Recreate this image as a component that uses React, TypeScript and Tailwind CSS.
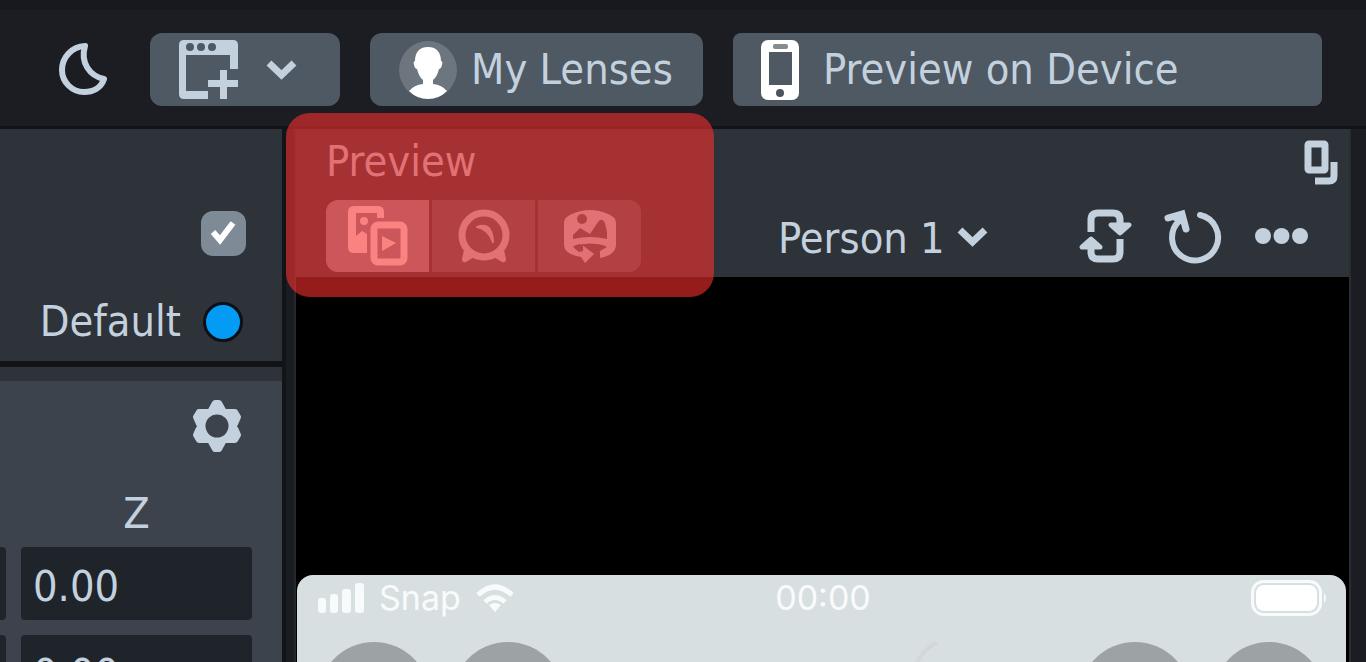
import { memo } from "react";
import type { ReactNode } from "react";

const rows = ["Position", "Rotation"];

export function App() {
  return (
    <div className="flex h-screen flex-col overflow-hidden bg-[#1b1d22] font-['DejaVu_Sans_Condensed','DejaVu_Sans',sans-serif] text-[43px] leading-none text-[#c3d1de]">
      <Toolbar />
      <main className="flex min-h-0 flex-1">
        <Inspector />
        <div className="w-[14px] shrink-0 border-r-2 border-l-4 border-r-[#25292d] border-l-[#111418] bg-[#191c20]"></div>
        <Preview />
        <div className="w-[17px] shrink-0 border-l-2 border-[#2a2d33]"></div>
      </main>
    </div>
  );
}

const Toolbar = memo(() => {
  return (
    <header className="shrink-0 border-b-[3px] border-[#111318] bg-[#1b1d22]">
      <div className="h-[10px] bg-[#18191e]"></div>
      <div className="flex items-center gap-[30px] pt-[23px] pr-11 pb-5 pl-14">
        <button className="mr-3" aria-label="Dark mode">
          <svg width="52" height="58" viewBox="0 0 52 58" fill="none" stroke="currentColor" strokeWidth="6" strokeLinejoin="round">
            <path d="M29 5A24 24 0 0 0 6 29C6 41 16 51 28 51C37 51 45 47 48 38C34 35 24 22 29 5Z" />
          </svg>
        </button>
        <button className="flex h-[73px] w-[190px] items-center gap-7 rounded-xl bg-[#4f5963] pl-[29px]" aria-label="New window">
          <svg width="59" height="59" viewBox="0 0 59 59" fill="currentColor">
            <path d="M5 0H54Q59 0 59 5V29H51V15H7V51H29V59H5Q0 59 0 54V5Q0 0 5 0Z" />
            <path d="M41 30H48V40H59V47H48V59H41V47H29V40H41Z" />
            <g fill="#4f5963">
              <circle cx="11" cy="7" r="4" />
              <circle cx="22" cy="7" r="4" />
              <circle cx="33" cy="7" r="4" />
            </g>
          </svg>
          <Chevron />
        </button>
        <button className="flex h-[73px] w-[333px] items-center gap-3.5 rounded-xl bg-[#4f5963] pl-[29px] whitespace-nowrap">
          <svg width="58" height="58" viewBox="0 0 58 58">
            <circle cx="29" cy="29" r="29" fill="#6d767e" />
            <path fill="#fff" d="M29 6C38 6 42 12 42 20Q44 20 43 24Q42 28 40 28Q38 36 34 39V43Q43 44 48 50Q40 58 29 58Q18 58 10 50Q15 44 24 43V39Q20 36 18 28Q16 28 15 24Q14 20 16 20C16 12 20 6 29 6Z" />
          </svg>
          My Lenses
        </button>
        <button className="flex h-[73px] flex-1 items-center gap-6 rounded-lg bg-[#4f5963] pl-7 whitespace-nowrap">
          <svg width="38" height="60" viewBox="0 0 38 60">
            <rect width="38" height="60" rx="7" fill="#fff" />
            <rect x="8" y="12" width="23" height="33" fill="#4f5963" />
            <rect x="12" y="4" width="15" height="5" rx="2" fill="#858b90" />
            <circle cx="19" cy="53" r="4" fill="#4b545d" />
          </svg>
          Preview on Device
        </button>
      </div>
    </header>
  );
});

const Inspector = memo(() => {
  return (
    <section className="flex w-[282px] shrink-0 flex-col overflow-hidden bg-[#2e3239]">
      <div className="flex h-[232px] shrink-0 flex-col items-end gap-11 pt-[82px] pr-9">
        <div className="relative h-[45px] w-[45px]">
          <input type="checkbox" defaultChecked aria-label="Enabled" className="block h-full w-full appearance-none rounded-xl bg-[#7e8b97]" />
          <svg className="pointer-events-none absolute inset-0" width="45" height="45" viewBox="0 0 45 45" fill="none" stroke="#fff" strokeWidth="6">
            <path d="M12 21L19 29L32 12" />
          </svg>
        </div>
        <div className="flex items-center gap-[22px] pr-[3px]">
          Default
          <button className="h-10 w-10 rounded-full border-[3px] border-[#0c1016] bg-[#049bf5]" aria-label="Layer colour"></button>
        </div>
      </div>
      <div className="h-5 shrink-0 border-t-[6px] border-[#111317]"></div>
      <div className="flex flex-1 flex-col items-end bg-[#3d434c] pt-[18px] pr-[30px]">
        <button className="mr-[9px]" aria-label="Settings">
          <svg width="52" height="54" viewBox="-26 -27 52 54" fill="currentColor" stroke="currentColor" strokeWidth="6" strokeLinejoin="round">
            <path d="M-2 -23H2L7 -14H18L21 -9L17 0L21 9L18 14H7L2 23H-2L-7 14H-18L-21 9L-17 0L-21 -9L-18 -14H-7Z" />
            <circle r="11.5" fill="#3d434c" stroke="none" />
          </svg>
        </button>
        <label htmlFor="Position-z" className="mt-[39px] mb-3 w-[231px] text-center">
          Z
        </label>
        <div className="flex flex-col gap-[15px]">
          {rows.map((row) => (
            <div key={row} className="flex justify-end gap-[15px]">
              <NumberBox id={`${row}-y`} label={`${row} Y`} />
              <NumberBox id={`${row}-z`} label={`${row} Z`} />
            </div>
          ))}
        </div>
      </div>
    </section>
  );
});

const NumberBox = ({ id, label }: { id: string; label: string }) => {
  return (
    <input id={id} aria-label={label} defaultValue="0.00" className="h-[73px] w-[231px] shrink-0 rounded-sm bg-[#1f242b] px-3 pt-1" />
  );
};

const Preview = memo(() => {
  return (
    <section className="relative flex min-w-0 flex-1 flex-col bg-black">
      <div className="h-[148px] shrink-0 bg-[#2e3239] pl-[30px]">
        <div className="flex h-[71px] items-start justify-between pt-[11px] pr-[11px]">
          <h2>Preview</h2>
          <button aria-label="Pop out">
            <svg width="34" height="45" viewBox="0 0 34 45" fill="none" stroke="currentColor" strokeWidth="7">
              <rect x="4" y="4" width="17" height="26" rx="1" />
              <path d="M30 22V36Q30 41 25 41H11" />
            </svg>
          </button>
        </div>
        <div className="flex items-center justify-between pr-[41px]">
          <div className="flex gap-[3px] overflow-hidden rounded-xl">
            <Tab label="Media" active>
              <MediaIcon />
            </Tab>
            <Tab label="Webcam">
              <WebcamIcon />
            </Tab>
            <Tab label="Interactive scene">
              <SceneIcon />
            </Tab>
          </div>
          <div className="flex items-center">
            <div className="relative mr-[90px]">
              <select aria-label="Preview source" className="block w-[210px] appearance-none bg-transparent pt-1 leading-[48px]">
                <option>Person 1</option>
              </select>
              <span className="pointer-events-none absolute top-4 right-0">
                <Chevron />
              </span>
            </div>
            <button className="mr-[30px]" aria-label="Swap camera">
              <svg width="54" height="56" viewBox="0 0 54 56" fill="none" stroke="currentColor" strokeWidth="7" strokeLinejoin="round">
                <path d="M13 24V12Q13 5 20 5H35Q42 5 42 12V17M42 31V44Q42 51 35 51H20Q13 51 13 44V39" />
                <path fill="currentColor" strokeWidth="5" d="M33 17H51L42 25ZM4 39H22L13 31Z" />
              </svg>
            </button>
            <button className="mr-[33px]" aria-label="Restart">
              <svg width="60" height="60" viewBox="0 0 60 60" fill="none" stroke="currentColor" strokeWidth="6" strokeLinecap="round">
                <path d="M38 9A23 23 0 1 1 17 15" />
                <path d="M6 12L20 8L24 23" strokeWidth="7" />
                <path d="M12 13L21 8L22 18Z" fill="currentColor" strokeWidth="3" />
              </svg>
            </button>
            <button aria-label="More">
              <svg width="53" height="16" viewBox="0 0 53 16" fill="currentColor">
                <circle cx="8" cy="8" r="8" />
                <circle cx="26.5" cy="8" r="8" />
                <circle cx="45" cy="8" r="8" />
              </svg>
            </button>
          </div>
        </div>
      </div>
      <Phone />
      {/* highlight around the title and source tabs */}
      <div className="pointer-events-none absolute -top-4 -left-[10px] h-[184px] w-[428px] rounded-3xl bg-[#f7302f]/60"></div>
    </section>
  );
});

const Tab = ({ label, active, children }: { label: string; active?: boolean; children: ReactNode }) => {
  return (
    <button
      aria-label={label}
      aria-pressed={!!active}
      className={
        active
          ? "flex h-[72px] w-[103px] items-center justify-center bg-[#8b919b] text-white"
          : "flex h-[72px] w-[103px] items-center justify-center bg-[#4f5963]"
      }
    >
      {children}
    </button>
  );
};

const Phone = memo(() => {
  return (
    <div className="mr-[3px] ml-px mt-[298px] shrink-0 rounded-t-2xl bg-[#d8dfe1]">
      <div className="grid h-[46px] grid-cols-[1fr_auto_1fr] items-center pr-[18px] pl-[21px] font-[Inter,sans-serif] text-[34px] text-[#f8fbfc]">
        <div className="flex items-center gap-[15px]">
          <svg width="46" height="30" viewBox="0 0 46 30" fill="currentColor">
            <rect y="15" width="8" height="15" rx="3" />
            <rect x="12" y="11" width="8" height="19" rx="3" />
            <rect x="24" y="6" width="9" height="24" rx="3" />
            <rect x="37" width="9" height="30" rx="3" />
          </svg>
          Snap
          <svg width="38" height="29" viewBox="0 0 38 29" fill="none" stroke="currentColor" strokeWidth="5">
            <path d="M2 11Q19 -5 36 11M9 18Q19 9 29 18" />
            <path d="M13 21Q19 17 25 21L19 28Z" fill="currentColor" stroke="none" />
          </svg>
        </div>
        <span>00:00</span>
        <svg className="justify-self-end" width="77" height="36" viewBox="0 0 77 36" fill="currentColor">
          <rect x="1.5" y="1.5" width="68" height="33" rx="11" fill="none" stroke="currentColor" strokeWidth="3" />
          <rect x="5" y="5" width="61" height="26" rx="8" fill="#fff" />
          <path d="M73 13Q77 18 73 23Z" />
        </svg>
      </div>
      <div className="flex items-start gap-[22px] px-[21px] pt-[21px]">
        <div className="h-28 w-28 rounded-full bg-[#9da2a4]"></div>
        <div className="h-28 w-28 rounded-full bg-[#9da2a4]"></div>
        <svg className="mr-[112px] ml-auto" width="32" height="40" viewBox="0 0 32 40" fill="none" stroke="#d1d7da" strokeWidth="4">
          <path d="M3 22Q10 8 24 0" />
        </svg>
        <div className="h-28 w-28 rounded-full bg-[#9da2a4]"></div>
        <div className="h-28 w-28 rounded-full bg-[#9da2a4]"></div>
      </div>
    </div>
  );
});

const Chevron = () => {
  return (
    <svg width="31" height="22" viewBox="0 0 31 22" fill="none" stroke="currentColor" strokeWidth="7">
      <path d="M3 4L15.5 16L28 4" />
    </svg>
  );
};

const MediaIcon = () => {
  return (
    <svg width="60" height="60" viewBox="0 0 60 60" fill="none" stroke="currentColor">
      <path d="M6 0H30Q36 0 36 6V12H29V7H8V30L14 25L19 28V47H6Q0 47 0 41V6Q0 0 6 0Z" fill="currentColor" stroke="none" />
      <circle cx="16" cy="15" r="4" fill="currentColor" stroke="none" />
      <rect x="26" y="19" width="30" height="37" rx="4" strokeWidth="7" />
      <path d="M34 30L48 37L34 45Z" fill="currentColor" stroke="none" />
    </svg>
  );
};

const WebcamIcon = () => {
  return (
    <svg width="54" height="54" viewBox="0 0 54 54" fill="none" stroke="currentColor">
      <circle cx="27" cy="26" r="22" strokeWidth="7" />
      <path d="M20 18Q35 12 36 33Q31 20 20 18Z" fill="currentColor" strokeWidth="2" strokeLinejoin="round" />
      <path d="M7 41L5 50Q5 54 9 53L19 47ZM47 41L49 50Q49 54 45 53L35 47Z" fill="currentColor" stroke="none" />
    </svg>
  );
};

const SceneIcon = () => {
  return (
    <svg width="54" height="54" viewBox="0 0 54 54" fill="currentColor">
      <path d="M9 5Q27 -3 45 5Q53 8 53 14V36Q53 46 37 49V42L43 37Q27 32 11 37L18 41V35L31 45L22 54L18 48Q1 45 1 36V14Q1 8 9 5Z" />
      <g fill="#4f5963">
        <circle cx="19" cy="10" r="5" />
        <path d="M10 30V26L17 19L27 25L35 13Q39 8 42 14L44 23V30Q27 26 10 30Z" />
        <path d="M10 38Q14 34 20 36V42L16 43ZM44 38Q36 34 26 36L35 43Z" />
      </g>
    </svg>
  );
};

export default memo(App);
